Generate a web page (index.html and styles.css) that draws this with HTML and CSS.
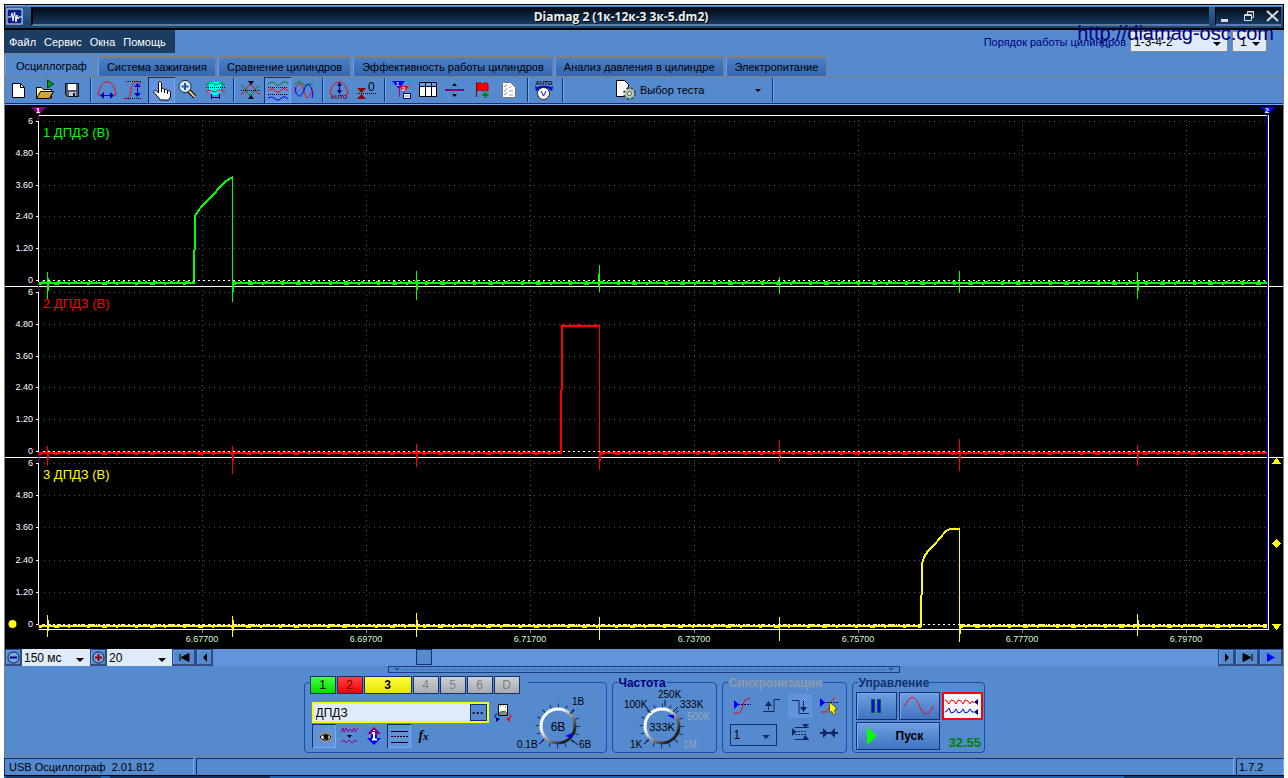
FILE: index.html
```html
<!DOCTYPE html>
<html lang="ru">
<head>
<meta charset="utf-8">
<title>Diamag 2</title>
<link rel="stylesheet" href="styles.css">
</head>
<body>
<div class="window">
  <header class="titlebar">
    <svg class="app-icon" width="18" height="18" viewBox="0 0 18 18"><rect x="1" y="1" width="15" height="15" fill="#0a1f8c" stroke="#dde8f8"/><path d="M2 9h3l1-4 1 8 1.500-9 1.500 10 1-7 1 4 1-2h3" fill="none" stroke="#fff"/></svg>
    <h1 class="title">Diamag 2 (1к-12к-3 3к-5.dm2)</h1>
    <div class="win-buttons">
      <button aria-label="Свернуть"><svg width="14" height="14"><path d="M2 10h7v3H2z" fill="#ddd"/></svg></button>
      <button aria-label="Восстановить"><svg width="14" height="14"><path d="M2.500 5.500h7v6h-7zM2 6.500h8M5.500 5V2.500h6v6H10M5 3h7" fill="none" stroke="#ddd"/></svg></button>
      <button aria-label="Закрыть"><svg width="14" height="14"><path d="M2 2l11 10M13 2L2 12" fill="none" stroke="#ddd" stroke-width="2"/></svg></button>
    </div>
  </header>
  <div class="menu-row">
    <nav class="menu"><button>Файл</button><button>Сервис</button><button>Окна</button><button>Помощь</button></nav>
    <div class="order">
      <label for="order">Порядок работы цилиндров</label>
      <span class="combo order-combo"><select id="order"><option>1-3-4-2</option></select></span>
      <span class="combo spin"><input id="cyl" type="text" value="1" aria-label="Номер цилиндра"></span>
      <a class="site" href="#">http://diamag-osc.com</a>
    </div>
  </div>
  <nav class="tabs">
    <button class="tab active">Осциллограф</button><button class="tab">Система зажигания</button><button class="tab">Сравнение цилиндров</button><button class="tab">Эффективность работы цилиндров</button><button class="tab">Анализ давления в цилиндре</button><button class="tab">Электропитание</button>
  </nav>
  <div class="toolbar">
    <button class="tool" aria-label="Новый"><svg viewBox="0 0 27 26"><path d="M7.500 6.500h8l4 4v10h-12z" fill="#fff" stroke="#000"/><path d="M15.500 6.500v4h4" fill="none" stroke="#000"/></svg></button>
    <button class="tool" aria-label="Открыть"><svg viewBox="0 0 27 26"><path d="M4.500 21V10.500h5l2 2h8V21z" fill="#fff8b0" stroke="#000"/><path d="M4.500 21.500l4-7h13l-4 7z" fill="#c8a838" stroke="#000"/><path d="M15.500 3v8l6-4z" fill="#00a000" stroke="#003800"/></svg></button>
    <button class="tool" aria-label="Сохранить"><svg viewBox="0 0 27 26"><path d="M6.500 6.500h13v13h-11l-2-2z" fill="#505878" stroke="#111"/><path d="M9 7h8v6H9z" fill="#fff"/><path d="M10 15h7v4h-7z" fill="#ccc"/><path d="M14 16h2v3h-2z" fill="#111"/></svg></button>
    <i class="sep"></i>
    <button class="tool" aria-label="Растянуть по времени"><svg viewBox="0 0 27 26"><path d="M6 18H4c1-7 4-12 8-13h3c4 2 6 6 7 13h-2" fill="none" stroke="#f00"/><path d="M7 18.500h12" stroke="#00c"/><path d="M10 15v7l-4-3.500zM16 15v7l4-3.500z" fill="#00c"/></svg></button>
    <button class="tool" aria-label="Растянуть по амплитуде"><svg viewBox="0 0 27 26"><path d="M3 21.500c7 1 6-4 7-9s3-9 7-8l3 2" fill="none" stroke="#f00"/><path d="M5 4.500h15M5 21.500h15" stroke="#000" stroke-dasharray="1 1"/><path d="M16.500 8v10" stroke="#00c"/><path d="M13 10h7l-3.500-4zM13 16h7l-3.500 4z" fill="#00c"/></svg></button>
    <button class="tool pressed" aria-label="Рука"><svg viewBox="0 0 27 26"><path d="M10.500 6c0-2 3-2 3 0v6c1-1 3-1 3 1 1-1 3-1 3 1 1-1 3 0 3 2v4l-2 3h-8l-6-7c-2-2 0-3 2-2l2 2z" fill="#fff" stroke="#000"/><path d="M13.500 12v3M16.500 13v3M19.500 14v3" stroke="#000"/></svg></button>
    <button class="tool" aria-label="Масштаб"><svg viewBox="0 0 27 26"><path d="M14 14l6 6" stroke="#000" stroke-width="4"/><path d="M14 14l6 6" stroke="#f0c890" stroke-width="2"/><circle cx="10" cy="9.500" r="6" fill="#d8ecff" stroke="#222"/><path d="M10 6v7M6.500 9.500h7" stroke="#1c50b0" stroke-width="2"/></svg></button>
    <button class="tool" aria-label="Фильтр"><svg viewBox="0 0 27 26"><path d="M7 5h12v9l-4 4h-4l-4-4z" fill="#0ff"/><path d="M4 8l3-2h3l4 2 4-2h2l3 2" fill="none" stroke="#080"/><path d="M4 15l3-2 3 1 3 1 4-2h3l3 2" fill="none" stroke="#f00"/><path d="M4 10.500h19" stroke="#000" stroke-dasharray="1 1"/><path d="M9.500 17v5M17.500 17v5M10 20.500h7" stroke="#000080"/></svg></button>
    <i class="sep"></i>
    <button class="tool" aria-label="Наложить"><svg viewBox="0 0 27 26"><path d="M4 9c5 0 5 9 9 9s5-9 10-9" fill="none" stroke="#080"/><path d="M4 17c5 0 5-9 9-9s5 9 10 9" fill="none" stroke="#f00"/><path d="M4 13.500h19" stroke="#000" stroke-dasharray="1 1"/><path d="M11 4h6l-3 4zM11 22h6l-3-4z" fill="#000"/></svg></button>
    <button class="tool pressed" aria-label="Раздельно"><svg viewBox="0 0 27 26"><g fill="none"><path d="M4 7l3-2h2l4 3h2l4-3h3l2 2" stroke="#080"/><path d="M4 14l3-2h2l4 3h2l4-3h3l2 2" stroke="#f00"/><path d="M4 21l3-1 3 1 3 2h2l4-3h3l2 2" stroke="#00f"/><path d="M4 10.500h20M4 17.500h20" stroke="#000" stroke-dasharray="1 1"/></g></svg></button>
    <button class="tool" aria-label="Вместе"><svg viewBox="0 0 27 26"><g fill="none"><path d="M4 7c3-3 5-3 8 0s6 1 10-1" stroke="#080"/><path d="M4 16c1-11 7-12 9-2s5 8 9-2" stroke="#f00"/><path d="M4 10c1 11 6 12 9 3s6-8 9 4l-1 4" stroke="#00f"/></g></svg></button>
    <i class="sep"></i>
    <button class="tool" aria-label="Автомасштаб"><svg viewBox="0 0 27 26"><path d="M6 17H4c1-7 4-11 8-12h3c4 2 6 6 7 12h-2" fill="none" stroke="#f00"/><path d="M13.500 6v10" stroke="#000080"/><path d="M11 9h5l-2.500-4zM11 13h5l-2.500 4z" fill="#000080"/><text x="13" y="22" class="micro" text-anchor="middle">AUTO</text></svg></button>
    <button class="tool" aria-label="Ноль"><svg viewBox="0 0 27 26"><path d="M4 11h9l-4.500 5zM4 22h9l-4.500-5z" fill="#900000"/><path d="M4 16.500h19" stroke="#000" stroke-dasharray="1 1"/><text x="15" y="14" class="icon-text">0</text></svg></button>
    <i class="sep"></i>
    <button class="tool" aria-label="Маркеры"><svg viewBox="0 0 27 26"><path d="M4 4h13l-6 8z" fill="#00f"/><path d="M11 9h10l-5 6z" fill="#f00"/><path d="M11.500 10v10M16 14v5" stroke="#a000a0"/><text x="8" y="9" class="micro light">1</text><text x="14" y="14" class="micro light">2</text><path d="M15.500 16.500h7v5h-7z" fill="#fff" stroke="#000080"/><path d="M17 19h4" stroke="#888"/></svg></button>
    <button class="tool" aria-label="Таблица"><svg viewBox="0 0 27 26"><path d="M4.500 5.500h17v14h-17z" fill="#fff" stroke="#000"/><path d="M5 6h16v3H5z" fill="#70a0f0"/><path d="M5 9.500h16M10.500 6v14M16.500 6v14" stroke="#000"/></svg></button>
    <button class="tool" aria-label="Разделитель"><svg viewBox="0 0 27 26"><path d="M3 13h19" stroke="#800080" stroke-width="2"/><path d="M10 9h5l-2.500-3zM10 17h5l-2.500 3z" fill="#000"/></svg></button>
    <button class="tool" aria-label="Добавить флаг"><svg viewBox="0 0 27 26"><path d="M7.500 5v15" stroke="#800000"/><path d="M8 7c4-3 5 1 6 0s3-2 5 0v7c-3-2-4 0-5 0s-3-2-6 0z" fill="#f00" stroke="#900"/><path d="M16.500 15v6M13.500 18h6" stroke="#008000" stroke-width="2"/></svg></button>
    <button class="tool" aria-label="Список"><svg viewBox="0 0 27 26"><path d="M6.500 5.500h8l5 5v10h-13z" fill="#fff" stroke="#777"/><path d="M8 9l1 1 2-3M8 13l1 1 2-3M8 17l1 1 2-3M13 10h2M13 14h4M13 18h4" fill="none" stroke="#999"/></svg></button>
    <i class="sep"></i>
    <button class="tool" aria-label="Авто"><svg viewBox="0 0 27 26"><text x="13" y="8" class="micro black" text-anchor="middle">AUTO</text><path d="M5 12c4-3 12-3 16 0" fill="none" stroke="#00c" stroke-width="2"/><path d="M4 9l1 5 4-2zM22 9l-1 5-4-2z" fill="#00c"/><circle cx="12.500" cy="16.500" r="6" fill="#fff" stroke="#222"/><path d="M10 14l2.500 5 2.500-5" fill="none" stroke="#00f"/></svg></button>
    <i class="sep"></i>
    <button class="test"><svg width="24" height="24" viewBox="0 0 24 24"><path d="M2.500 2.500h8l4 4v12h-12z" fill="#fff" stroke="#000"/><circle cx="15.500" cy="15.500" r="5" fill="#b8d0b8" stroke="#405040" stroke-width="3" stroke-dasharray="2 2"/><circle cx="15.500" cy="15.500" r="4.500" fill="#b8d0b8"/><circle cx="15.500" cy="15.500" r="2" fill="#fff" stroke="#405040"/></svg>Выбор теста<i class="arrow"></i></button>
    <i class="sep"></i>
  </div>

  <svg class="chart" viewBox="5 105 1278 544" role="img" aria-label="Осциллограммы ДПДЗ">
    <g class="grid">
      <path d="M44 121.500H1267M44 153.500H1267M44 185.500H1267M44 216.500H1267M44 248.500H1267M44 292.500H1267M44 324.500H1267M44 356.500H1267M44 387.500H1267M44 419.500H1267M44 463.500H1267M44 495.500H1267M44 527.500H1267M44 560.500H1267M44 592.500H1267"/>
      <path d="M202.500 120V629M366.500 120V629M530.500 120V629M694.500 120V629M858.500 120V629M1022.500 120V629M1186.500 120V629"/>
    </g>
    <g class="axis">
      <path d="M38 115.500H1269M5 286.500H1283M5 457.500H1283M38 629.500H1269M38.500 115V630M1268.500 115V630"/>
      <path d="M36 121.500h3M36 153.500h3M36 185.500h3M36 216.500h3M36 248.500h3M36 280.500h3M36 292.500h3M36 324.500h3M36 356.500h3M36 387.500h3M36 419.500h3M36 451.500h3M36 463.500h3M36 495.500h3M36 527.500h3M36 560.500h3M36 592.500h3M36 624.500h3"/>
    </g>
    <path class="ticks" d="M202.500 630v3M366.500 630v3M530.500 630v3M694.500 630v3M858.500 630v3M1022.500 630v3M1186.500 630v3"/>
    <path class="m-blue" d="M1267.500 114V629"/>
    <path class="m-purple" d="M38.500 115v6M38.500 282v10M38.500 452v11M38.500 625v5"/>
    <g class="trace green">
      <path class="base" d="M39 283H194M233 283H1267"/><path class="noise" d="M42 281.500H194M233 281.500H1267"/><path class="noise low" d="M39 284.500H192M233 284.500H1267"/>
      <path class="thick" d="M194 284V250"/><path class="thick" d="M195 250V216L198 211 202 206 209 199 214 194 219 188 225 182 229 179 233 177"/>
      <path d="M232.500 177V302M233.500 283V292M47.500 272V299M48.500 278V291M416.500 271V300M417.500 280V290M599.500 265V292M598.500 274V286M779.500 277V294M959.500 271V293M1137.500 272V299M1138.500 280V291"/>
    </g>
    <g class="trace red">
      <path class="base" d="M39 453H561M600 453H1267"/><path class="noise" d="M45 451.500H561M600 451.500H1267"/><path class="noise low" d="M39 454.500H561M600 454.500H1267"/>
      <path class="thick" d="M561 454V390M562 390V326H600"/><path class="noise" d="M562 324.500H599"/>
      <path d="M599.500 326V470M600.500 453V461M47.500 446V466M48.500 450V459M232.500 446V474M233.500 450V461M416.500 444V467M417.500 450V460M779.500 440V462M780.500 450V457M959.500 439V471M960.500 450V459M1137.500 445V466M1138.500 450V459"/>
    </g>
    <g class="trace yellow">
      <path class="base" d="M39 626H921M960 626H1267"/><path class="noise" d="M42 624.500H921M960 624.500H1267"/><path class="noise low" d="M39 627.500H921M960 627.500H1267"/>
      <path class="thick" d="M921 627V595M922 595V564L924 557 928 551 934 545 940 538 946 531 950 529H960"/>
      <path d="M959.500 529V642M960.500 626V634M47.500 615V637M48.500 620V631M232.500 616V637M233.500 620V631M416.500 613V637M417.500 620V630M599.500 617V640M779.500 617V641M1137.500 614V636M1138.500 620V630"/>
    </g>
    <path class="zero" d="M43 280.500H1267M43 451.500H1267M43 624.500H1267"/>
    <g class="scale">
      <text x="33" y="124">6</text><text x="33" y="156">4.80</text><text x="33" y="188">3.60</text><text x="33" y="219">2.40</text><text x="33" y="251">1.20</text><text x="33" y="283">0</text>
      <text x="33" y="295">6</text><text x="33" y="327">4.80</text><text x="33" y="359">3.60</text><text x="33" y="390">2.40</text><text x="33" y="422">1.20</text><text x="33" y="454">0</text>
      <text x="33" y="466">6</text><text x="33" y="498">4.80</text><text x="33" y="530">3.60</text><text x="33" y="563">2.40</text><text x="33" y="595">1.20</text><text x="33" y="627">0</text>
    </g>
    <g class="times">
      <text x="202" y="642">6.67700</text><text x="366" y="642">6.69700</text><text x="530" y="642">6.71700</text><text x="694" y="642">6.73700</text><text x="858" y="642">6.75700</text><text x="1022" y="642">6.77700</text><text x="1186" y="642">6.79700</text>
    </g>
    <g class="names"><text x="43" y="137" fill="#0f0">1 ДПДЗ (В)</text><text x="43" y="308" fill="#f00">2 ДПДЗ (В)</text><text x="43" y="479" fill="#ff0">3 ДПДЗ (В)</text></g>
    <path d="M31 107h15l-7 8h-1z" fill="#800080"/><text class="mark" x="38" y="113">1</text>
    <path d="M1260 107h15l-7 7h-1z" fill="#00f"/><text class="mark" x="1267" y="113">2</text>
    <circle cx="12.500" cy="624" r="4" fill="#ff0"/>
    <path d="M1272 464h9l-4-6h-1zM1272 543.500l4.500-4.500 4.500 4.500-4.500 4.500zM1272 624h9l-4 6h-1z" fill="#ff0"/>
  </svg>

  <div class="scroll-row">
    <button class="nav" aria-label="Уменьшить"><svg width="15" height="15"><circle cx="7.500" cy="7.500" r="5.500" fill="#78a8ea" stroke="#123"/><path d="M4 7.500h7" stroke="#000080" stroke-width="2"/></svg></button>
    <span class="combo span-combo"><select aria-label="Развёртка"><option>150 мс</option></select></span>
    <button class="nav" aria-label="Увеличить"><svg width="15" height="15"><circle cx="7.500" cy="7.500" r="5.500" fill="#78a8ea" stroke="#123"/><path d="M4 7.500h7M7.500 4v7" stroke="#900000" stroke-width="2"/></svg></button>
    <span class="combo step-combo"><select aria-label="Шаг"><option>20</option></select></span>
    <button class="nav wide" aria-label="В начало"><svg width="13" height="9"><path d="M2 1v7M3 4.500l8-4v8z" stroke="#000" stroke-width="1"/></svg></button>
    <button class="nav" aria-label="Назад"><svg width="8" height="9"><path d="M2 4.500L6 0v9z"/></svg></button>
    <div class="track"><i class="thumb"></i></div>
    <button class="nav" aria-label="Вперёд"><svg width="8" height="9"><path d="M6 4.500L2 0v9z"/></svg></button>
    <button class="nav wide" aria-label="В конец"><svg width="13" height="9"><path d="M11 1v7M10 4.500l-8-4v8z" stroke="#000"/></svg></button>
    <button class="nav wide" aria-label="Воспроизвести"><svg width="10" height="9"><path d="M1 0l8 4.500L1 9z" fill="#00f"/></svg></button>
  </div>

  <div class="panel">
    <div class="splitter"><b></b><i></i><b></b></div>
    <div class="groups">
      <fieldset class="group channels">
        <div class="chan-tabs"><button class="c1">1</button><button class="c2">2</button><button class="c3">3</button><button>4</button><button>5</button><button>6</button><button>D</button></div>
        <div class="chan-main">
          <div class="chan-row">
            <div class="name-box"><input type="text" value="ДПДЗ" aria-label="Имя канала"><button aria-label="Выбрать">···</button></div>
            <button class="small" aria-label="Прибор"><svg width="20" height="20" viewBox="0 0 20 20"><path d="M5.500 1.500h9v11h-9z" fill="#fff" stroke="#000"/><path d="M6 9h8v3H6z" fill="#888"/><path d="M7 3h1M10 2h1M12 4h1M7 9l6-1" stroke="#080"/><path d="M4 11c-3 1-3 4 1 5" fill="none" stroke="#000080"/><path d="M3 14l4 2-4 3z" fill="#000080"/><path d="M16 11c3 1 3 4-1 5" fill="none" stroke="#f00"/><path d="M17 14l-4 2 4 3z" fill="#f00"/></svg></button>
          </div>
          <div class="chan-icons">
            <button class="ic pressed" aria-label="Показать"><svg viewBox="0 0 24 24"><path d="M7 11c4-4 10-4 13 0v4c-3 4-9 4-12 1z" fill="#968f7f"/><path d="M8 13c3-3 8-3 11 0-3 4-8 4-11 0z" fill="#fff" stroke="#000"/><circle cx="14" cy="13" r="2.500"/></svg></button>
            <button class="ic" aria-label="Сгладить"><svg viewBox="0 0 24 24"><path d="M4 8l2-4 1 4 2-4 2 4 2-3 2 3 2-4 1 4 3-4" fill="none" stroke="#900090"/><path d="M10 11h5l-2.500 3z"/><path d="M4 18l3-2 2 3 3-3 3 3 3-3 2 2" fill="none" stroke="#900090"/></svg></button>
            <button class="ic" aria-label="Инвертировать"><svg viewBox="0 0 24 24"><path d="M5 10l7-7 7 7h-4v3H9v-3z" fill="#800080"/><path d="M5 14l7 7 7-7h-4v-3H9v3z" fill="#00f"/><path d="M12 6v1M10 9h2v6M10 15.500h5" fill="none" stroke="#fff" stroke-width="2"/></svg></button>
            <button class="ic pressed" aria-label="Сетка"><svg viewBox="0 0 24 24"><path d="M4 7.500h17M4 18.500h17" stroke="#000"/><path d="M4 12.500h17" stroke="#000" stroke-dasharray="2 1"/></svg></button>
            <button class="ic fx">f<small>x</small></button>
          </div>
        </div>
        <svg class="knob-svg" width="84" height="60" viewBox="514 692 84 60" role="img" aria-label="Диапазон 6В">
          <defs><linearGradient id="rim" x1="0" y1="0" x2="1" y2="1"><stop offset="0.300" stop-color="#fff"/><stop offset="0.500" stop-color="#aaa"/><stop offset="0.800" stop-color="#222"/></linearGradient></defs>
          <g transform="translate(557 726)"><circle r="20" class="knob-ticks" stroke-width="5" pathLength="16" stroke-dasharray=".12 .88" stroke="#14305e"/><circle r="17" fill="#558acf" stroke="url(#rim)" stroke-width="3"/></g>
          <path d="M569 714l4-5M543 740l-5 4M571 740l6 5" stroke="#001030"/><path d="M564 736l7-3v5z" fill="#00f"/>
          <g class="knob-text"><text x="571" y="705">1В</text><text x="516" y="748">0.1В</text><text x="578" y="748">6В</text><text x="557" y="731" class="value">6В</text></g>
        </svg>
      </fieldset>

      <fieldset class="group freq"><legend>Частота</legend>
        <svg width="100" height="64" viewBox="613 688 100 64" role="img" aria-label="Частота 333K">
          <g transform="translate(661 726)"><circle r="20" class="knob-ticks" stroke-width="5" pathLength="16" stroke-dasharray=".12 .88" stroke="#14305e"/><circle r="17" fill="#558acf" stroke="url(#rim)" stroke-width="3"/></g>
          <path d="M650 713l-4-5M664 706v-6M672 712l5-5M648 740l-5 4" stroke="#001030"/><path d="M666 715h7v4z" fill="#00f"/>
          <g class="knob-text"><text x="623" y="708">100K</text><text x="657" y="698">250K</text><text x="679" y="708">333K</text><text x="686" y="720" fill="#9aa6b8">500K</text><text x="629" y="748">1K</text><text x="682" y="748" fill="#9aa6b8">1M</text><text x="661" y="731" class="value small-value">333K</text></g>
        </svg>
      </fieldset>

      <fieldset class="group sync"><legend>Синхронизация</legend>
        <div class="sync-grid">
          <button class="ic" aria-label="Уровень"><svg viewBox="0 0 24 24"><path d="M4 19h4c5-1 4-8 7-13l5-2" fill="none" stroke="#f00"/><path d="M5 10.500h16" stroke="#000080" stroke-dasharray="2 1"/><path d="M4 6v9l5-4.500z" fill="#00f"/></svg></button>
          <button class="ic" aria-label="Фронт"><svg viewBox="0 0 24 24"><path d="M4 17.500h11v-12h6M9.500 16V9" fill="none" stroke="#102860"/><path d="M6 12l3.500-5 3.500 5z" fill="#102860"/></svg></button>
          <button class="ic dither" aria-label="Спад"><svg viewBox="0 0 24 24"><path d="M4 6.500h7v13h10M15.500 7v9" fill="none" stroke="#102860"/><path d="M12 13l3.500 5 3.500-5z" fill="#102860"/></svg></button>
          <button class="ic" aria-label="Указать уровень"><svg viewBox="0 0 24 24"><path d="M4 18h4c5-1 4-10 10-15" fill="none" stroke="#f00"/><path d="M4 8.500h17" stroke="#000080" stroke-dasharray="2 1"/><path d="M3 4v9l5-4.500z" fill="#00f"/><path d="M12.500 8v11l2-2 2 4 2-1-1-4 3-1z" fill="#ff0" stroke="#553"/></svg></button>
          <span class="combo sync-combo"><select aria-label="Канал"><option>1</option></select></span>
          <button class="ic" aria-label="Диапазон"><svg viewBox="0 0 24 24"><path d="M7 6.500h14M7 18.500h14" stroke="#102860"/><path d="M7 10.500h12M7 13.500h12" stroke="#102860" stroke-dasharray="2 1"/><path d="M4 7v8l4-4zM14 3h7l-3.500 4zM14 19h7l-3.500-5z" fill="#102860"/></svg></button>
          <button class="ic" aria-label="Сжать"><svg viewBox="0 0 24 24"><path d="M3 12h18" stroke="#102860" stroke-width="2"/><path d="M6 7v10l5-5zM18 7v10l-5-5z" fill="#102860"/></svg></button>
        </div>
      </fieldset>

      <fieldset class="group control"><legend>Управление</legend>
        <div class="ctl-grid">
          <button class="ctl" aria-label="Пауза"><svg width="36" height="24"><path d="M13.500 5.500h3v13h-3zM19.500 5.500h3v13h-3z" fill="#00f" stroke="#006030"/></svg></button>
          <button class="ctl" aria-label="Синусоида"><svg width="36" height="24"><path d="M4 12C8 1 14 1 18 11S27 24 32 12" fill="none" stroke="#f00"/></svg></button>
          <button class="ctl alert" aria-label="Сигналы"><svg width="36" height="24"><path d="M1 6l2 1 2 3 2-4 3 1 2 3 2-4 3 1 2 3 2-4 3 1 2 3 2-3 2 2" fill="none" stroke="#f00"/><path d="M1 18l2-1 2-3 2 5 3-1 2-3 2 4 3-1 2-3 2 4 3-1 2-3 2 3 2 0" fill="none" stroke="#00f"/><path d="M34 5v6l-4-3zM34 15v6l-4-3z" fill="#000080"/></svg></button>
          <button class="ctl start"><svg width="12" height="18"><path d="M1 0l10 9L1 18z" fill="#0f0"/></svg>Пуск</button>
          <output>32.55</output>
        </div>
      </fieldset>
    </div>
  </div>
  <footer class="status"><span class="pane first">USB Осциллограф&nbsp; 2.01.812</span><span class="pane fill"></span><span class="pane ver">1.7.2</span></footer>
</div>
<div class="taskbar"></div>
</body>
</html>
```
FILE: styles.css
```css
* { box-sizing: border-box; }
body { margin: 0; padding: 4px 4px 0; background: #fff; color: #000; font: 12px "Liberation Sans", Arial, sans-serif; }
button, input, select { font: inherit; color: inherit; margin: 0; padding: 0; border: 0; background: none; border-radius: 0; }
button { display: flex; align-items: center; justify-content: center; }
svg { display: block; }
select { appearance: none; }

.window { background: #558acf; }
.titlebar { display: flex; align-items: center; height: 26px; padding: 2px 2px 2px 1px; border: 1px solid #000; border-bottom-width: 2px; background: linear-gradient(#6aaae8 0 1px, #2c5f9c 2px, #1b426f); }
.app-icon { margin: 0 7px 0 0; }
.title { flex: 1; align-self: stretch; margin: 0 6px 0 0; border-left: 2px solid #000; border-bottom: 2px solid #5c7ca0; background: linear-gradient(#020a14, #0a1e33 45%, #173a62); color: #f0f0f0; font: bold 12px/20px "Open Sans", sans-serif; text-align: center; text-shadow: 1px 1px 0 #000; }
.win-buttons { display: flex; align-self: stretch; gap: 9px; padding: 0 2px 0 3px; border-left: 1px solid #000; border-bottom: 2px solid #5c7ca0; background: linear-gradient(#020a14, #173a62); }

.menu-row { display: flex; justify-content: space-between; align-items: flex-start; height: 24px; font-size: 11px; }
.menu { display: flex; gap: 8px; padding: 0 9px 0 5px; background: #1c3c62; }
.menu button { height: 23px; color: #fff; }
.order { position: relative; display: flex; align-items: center; gap: 4px; padding: 1px 17px 0 0; color: #000080; }
.site { position: absolute; right: 10px; top: -9px; color: #000080; font-size: 20px; line-height: 24px; text-decoration: none; white-space: nowrap; }
.combo { position: relative; display: flex; background: #dfebf8; color: #000; }
.combo::after { content: ""; position: absolute; right: 6px; top: 50%; border: 4px solid transparent; border-top-color: #000; border-bottom: 0; pointer-events: none; }
.combo select, .combo input { width: 100%; padding: 0 3px; }
.order-combo { width: 98px; height: 21px; border: 1px solid #888; font-size: 12px; }
.spin { width: 35px; height: 21px; border: 1px solid #888; font-size: 12px; }
.spin input { padding-left: 7px; }

.tabs { display: flex; align-items: flex-end; gap: 2px; height: 23px; border-bottom: 1px solid #808080; border-left: 1px solid #808080; font-size: 11px; }
.tab { height: 20px; padding: 0 8px; border: 1px solid #808080; border-top-width: 2px; border-bottom: 0; border-left-color: #6a9de0; border-radius: 3px 3px 0 0; background: linear-gradient(#4a7fc6, #3567b2); white-space: nowrap; }
.tab.active { height: 22px; padding: 0 8px 0 10px; border-top-width: 1px; background: #558acf; }

.toolbar { display: flex; align-items: center; height: 28px; border-left: 1px solid #808080; border-right: 1px solid #808080; border-bottom: 1px solid #78a8f8; box-shadow: inset 0 -1px #10306f; padding-bottom: 1px; }
.tool { width: 27px; height: 26px; }
.tool svg { width: 27px; height: 26px; }
.tool svg, .ic svg, .nav svg { flex: none; }
.sep { position: relative; width: 8px; height: 24px; flex: none; background: linear-gradient(90deg, transparent 4px, #10306f 4px 5px, #78a8f8 5px 6px, transparent 6px); }
.pressed, .dither, .track { background: repeating-conic-gradient(#6f9ce6 0 25%, #558acf 0 50%) 0 0 / 2px 2px; }
.pressed { box-shadow: inset 1px 1px #10306f, inset -1px -1px #78a8f8; }
.micro { font: bold 6px "Liberation Sans", sans-serif; fill: #600020; }
.micro.light { fill: #fff; }
.micro.black { fill: #000; }
.icon-text { font-size: 12px; }
.test { width: 202px; justify-content: flex-start; padding: 0 7px 0 48px; font-size: 11px; white-space: nowrap; }
.test svg { margin-right: 2px; }
.arrow { margin-left: auto; border: 3px solid transparent; border-top-color: #000; border-bottom: 0; }

.chart { width: 100%; height: auto; background: #000; border-left: 1px solid #808080; border-right: 1px solid #808080; }
.chart path { shape-rendering: crispEdges; }
.grid path { fill: none; stroke: #505050; stroke-dasharray: 1 4; }
.axis path { fill: none; stroke: #fff; }
.zero { stroke: #fff; stroke-dasharray: 2 3; }
.ticks { stroke: #888; }
.m-blue { stroke: #00f; }
.m-purple { stroke: #800080; }
.trace { fill: none; }
.trace .base, .trace .thick { stroke-width: 2px; }
.noise { stroke-dasharray: 3 4 2 6 4 3 1 9; }
.low { stroke-dasharray: 3 12 5 9 2 17; }
.green { stroke: #0f0; }
.red { stroke: #f00; }
.yellow { stroke: #ff0; }
.scale { fill: #fff; font-size: 9px; text-anchor: end; }
.times { fill: #cfc; font-size: 9px; text-anchor: middle; }
.names { font-size: 13px; }
.mark { fill: #fff; font: bold 8px "Liberation Sans", sans-serif; text-anchor: middle; }

.scroll-row { display: flex; height: 17px; border-left: 1px solid #808080; border-right: 1px solid #808080; }
.nav { width: 17px; flex: none; border: 1px solid #1c4ca0; box-shadow: inset -1px -1px #444e60, inset 1px 1px #6a9de0; background: #558acf; }
.nav.wide { width: 24px; }
.span-combo { width: 68px; }
.step-combo { width: 65px; }
.scroll-row select { padding: 0 2px; }
.track { flex: 1; padding-left: 203px; }
.thumb { display: block; width: 16px; height: 16px; border: 1px solid #10306f; background: #558acf; }

.panel { border: 1px solid #808080; border-top: 0; padding-bottom: 2px; }
.splitter { display: flex; align-items: center; gap: 2px; width: 40%; height: 7px; margin: 0 auto; padding: 0 5px; border: 1px solid #1c3c80; }
.splitter i { flex: 1; border-top: 1px dotted #2858a0; }
.splitter b { border: 3px solid transparent; border-top-color: #2858a0; border-bottom: 0; }
.groups { display: flex; justify-content: center; gap: 5px; margin-top: 9px; }
.group { position: relative; display: flex; height: 71px; min-width: 0; margin: 0; padding: 0; border: 1px solid #1c4ca8; border-radius: 4px; }
.group legend { position: absolute; left: 5px; top: -7px; padding: 0 1px; background: #558acf; color: #000080; font-weight: bold; line-height: 14px; }
.group.sync legend { color: #8f9aaa; }
.group.control legend { color: #10306f; }
.channels { width: 303px; }
.freq { width: 105px; }
.sync { width: 125px; }
.control { width: 133px; }
.freq svg { margin: 5px 0 0 1px; }
.chan-tabs { position: absolute; left: 5px; top: -7px; display: flex; gap: 1px; padding-right: 8px; background: #558acf; }
.chan-tabs button { width: 26px; height: 18px; border: 1px solid #10306f; background: linear-gradient(#ccd0d4, #a8acb0); color: #7c8084; }
.chan-tabs .c1 { background: linear-gradient(#4f4, #0d0); color: #000; }
.chan-tabs .c2 { background: linear-gradient(#f44, #e00); color: #600; }
.chan-tabs .c3 { width: 48px; background: linear-gradient(#ff4, #e4e400); color: #000; font-weight: bold; }
.chan-main { width: 207px; padding: 19px 0 0 7px; }
.chan-row { display: flex; gap: 4px; }
.name-box { display: flex; width: 177px; height: 21px; border: 2px solid #ff0; background: #dfebf8; }
.name-box input { flex: 1; min-width: 0; padding-left: 2px; }
.name-box button { width: 17px; border: 1px solid #10306f; background: #558acf; font-weight: bold; }
.chan-icons { display: flex; gap: 1px; margin-top: 1px; }
.ic { width: 24px; height: 24px; }
.ic svg { width: 24px; height: 24px; }
.fx { font: italic bold 14px "Liberation Serif", serif; }
.fx small { font-size: 11px; }
.knob-svg { margin: 9px 0 0 3px; }
.knob-ticks { fill: none; }
.knob-text { font-size: 10px; }
.value { font-size: 12px; text-anchor: middle; }
.small-value { font-size: 11px; }
.sync-grid { display: grid; grid-template-columns: repeat(4, 24px); gap: 3px 5px; padding: 11px 0 0 7px; align-content: start; }
.sync-combo { grid-column: span 2; width: 47px; height: 22px; margin-top: 3px; border: 1px solid #10306f; background: #558acf; }
.sync-combo::after { border-top-color: #10306f; }
.ctl-grid { display: grid; grid-template-columns: repeat(3, 41px); gap: 2px; padding: 9px 0 0 3px; align-content: start; }
.ctl { height: 28px; border: 1px solid #10306f; box-shadow: inset 1px 1px #80aaf0; background: linear-gradient(#70a0e0, #3f74c2); }
.alert { border: 2px solid #f00; background: #f4f4fa; box-shadow: none; }
.start { grid-column: span 2; justify-content: flex-start; gap: 18px; padding-left: 9px; font-weight: bold; }
.ctl-grid output { align-self: end; padding-left: 7px; color: #008000; font-size: 13px; font-weight: bold; }

.status { display: flex; gap: 2px; height: 19px; padding-top: 2px; background: #558acf; font-size: 11px; }
.pane { padding-left: 4px; border: 1px solid #10306f; border-right-color: #78a8f8; border-bottom: 0; line-height: 16px; white-space: nowrap; }
.first { width: 190px; }
.fill { flex: 1; }
.ver { width: 48px; padding-left: 2px; }
.taskbar { height: 4px; border-top: 1px solid #000; background: linear-gradient(90deg, #1c62b0 2px, #163a66 2px 97px, #1c62b0 97px 106px, #0f2f58 106px 266px, #1c62b0 266px 340px, #1c62b0 1120px, #123a68 1120px); }
```
